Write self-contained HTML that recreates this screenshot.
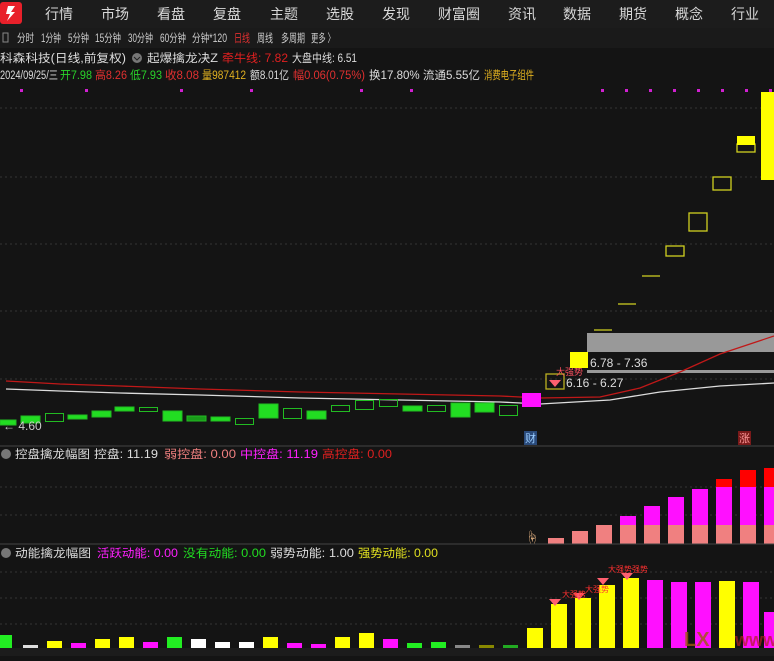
<!DOCTYPE html>
<html><head><meta charset="utf-8"><style>
body{margin:0;width:774px;height:656px;background:#141414;overflow:hidden;font-family:"Liberation Sans","Noto Sans CJK SC",sans-serif;}
svg text{font-family:"Liberation Sans","Noto Sans CJK SC",sans-serif;}
</style></head><body>
<svg width="774" height="656" xmlns="http://www.w3.org/2000/svg">
<rect width="774" height="656" fill="#141414"/>
<rect width="774" height="28" fill="#1c1c1c"/>
<rect x="0" y="2" width="22" height="22" rx="3" fill="#e8202a"/>
<path d="M8 6 L15 6 L11 12 L15 12 L7 21 L10 14 L6 14 Z" fill="#fff"/>
<g fill="#d8d8d8" font-size="14">
<text x="45" y="19">行情</text><text x="101" y="19">市场</text><text x="157" y="19">看盘</text><text x="213" y="19">复盘</text><text x="270" y="19">主题</text><text x="326" y="19">选股</text><text x="382" y="19">发现</text><text x="438" y="19">财富圈</text><text x="508" y="19">资讯</text><text x="563" y="19">数据</text><text x="619" y="19">期货</text><text x="675" y="19">概念</text><text x="731" y="19">行业</text>
</g>
<rect x="0" y="28" width="774" height="20" fill="#1a1a1a"/>
<rect x="3" y="33" width="5" height="9" fill="none" stroke="#888" stroke-width="1"/>
<g font-size="11.5" fill="#ccc" lengthAdjust="spacingAndGlyphs">
<text x="17" y="42" textLength="17" lengthAdjust="spacingAndGlyphs">分时</text>
<text x="41" y="42" textLength="20" lengthAdjust="spacingAndGlyphs">1分钟</text>
<text x="68" y="42" textLength="21" lengthAdjust="spacingAndGlyphs">5分钟</text>
<text x="95" y="42" textLength="26" lengthAdjust="spacingAndGlyphs">15分钟</text>
<text x="128" y="42" textLength="25" lengthAdjust="spacingAndGlyphs">30分钟</text>
<text x="160" y="42" textLength="26" lengthAdjust="spacingAndGlyphs">60分钟</text>
<text x="192" y="42" textLength="35" lengthAdjust="spacingAndGlyphs">分钟*120</text>
<text x="234" y="42" fill="#e03030" textLength="16" lengthAdjust="spacingAndGlyphs">日线</text>
<text x="257" y="42" textLength="16" lengthAdjust="spacingAndGlyphs">周线</text>
<text x="281" y="42" textLength="24" lengthAdjust="spacingAndGlyphs">多周期</text>
<text x="311" y="42" textLength="24" lengthAdjust="spacingAndGlyphs">更多 〉</text>
</g>
<g font-size="11.5">
<text x="0" y="62" fill="#ddd" textLength="126" lengthAdjust="spacingAndGlyphs">科森科技(日线,前复权)</text>
<circle cx="137" cy="58" r="5" fill="#777"/><path d="M134 57 L137 60 L140 57" stroke="#222" fill="none"/>
<text x="147" y="62" fill="#ddd" textLength="71" lengthAdjust="spacingAndGlyphs">起爆擒龙决Z</text>
<text x="222" y="62" fill="#e02020" textLength="66" lengthAdjust="spacingAndGlyphs">牵牛线: 7.82</text>
<text x="292" y="62" fill="#ddd" textLength="65" lengthAdjust="spacingAndGlyphs">大盘中线: 6.51</text>
<text x="0" y="79" fill="#ddd" textLength="58" lengthAdjust="spacingAndGlyphs">2024/09/25/三</text>
<text x="60" y="79" fill="#2ad12a" textLength="32" lengthAdjust="spacingAndGlyphs">开7.98</text>
<text x="95" y="79" fill="#e03030" textLength="32" lengthAdjust="spacingAndGlyphs">高8.26</text>
<text x="130" y="79" fill="#2ad12a" textLength="32" lengthAdjust="spacingAndGlyphs">低7.93</text>
<text x="165" y="79" fill="#e03030" textLength="34" lengthAdjust="spacingAndGlyphs">收8.08</text>
<text x="202" y="79" fill="#e0b020" textLength="44" lengthAdjust="spacingAndGlyphs">量987412</text>
<text x="250" y="79" fill="#ddd" textLength="39" lengthAdjust="spacingAndGlyphs">额8.01亿</text>
<text x="293" y="79" fill="#e03030" textLength="72" lengthAdjust="spacingAndGlyphs">幅0.06(0.75%)</text>
<text x="369" y="79" fill="#ddd" textLength="111" lengthAdjust="spacingAndGlyphs">换17.80% 流通5.55亿</text>
<text x="484" y="79" fill="#e0b020" textLength="50" lengthAdjust="spacingAndGlyphs">消费电子组件</text>
</g>
<g fill="#d020d0">
<rect x="20" y="89" width="3" height="3"/><rect x="85" y="89" width="3" height="3"/><rect x="180" y="89" width="3" height="3"/><rect x="250" y="89" width="3" height="3"/><rect x="360" y="89" width="3" height="3"/><rect x="410" y="89" width="3" height="3"/>
<rect x="601" y="89" width="3" height="3"/><rect x="625" y="89" width="3" height="3"/><rect x="649" y="89" width="3" height="3"/><rect x="673" y="89" width="3" height="3"/><rect x="697" y="89" width="3" height="3"/><rect x="721" y="89" width="3" height="3"/><rect x="745" y="89" width="3" height="3"/><rect x="769" y="89" width="3" height="3"/>
</g>
<g stroke="#333" stroke-dasharray="2 3">
<line x1="0" y1="108" x2="774" y2="108"/><line x1="0" y1="177" x2="774" y2="177"/><line x1="0" y1="244" x2="774" y2="244"/><line x1="0" y1="311" x2="774" y2="311"/><line x1="0" y1="379" x2="774" y2="379"/>
<line x1="0" y1="487" x2="774" y2="487"/><line x1="0" y1="515" x2="774" y2="515"/>
<line x1="0" y1="572" x2="774" y2="572"/><line x1="0" y1="598" x2="774" y2="598"/><line x1="0" y1="624" x2="774" y2="624"/>
</g>
<rect x="587" y="333" width="187" height="19" fill="#999"/>
<rect x="587" y="370" width="187" height="3" fill="#999"/>
<text x="590" y="367" fill="#ddd" font-size="12">6.78 - 7.36</text>
<text x="566" y="387" fill="#ddd" font-size="12">6.16 - 6.27</text>
<polyline points="6,381 60,384 120,386 200,389 300,392 400,394 500,396 540,398 600,397 640,388 680,372 720,354 774,336" fill="none" stroke="#c01818" stroke-width="1.3"/>
<polyline points="6,389 60,391 120,393 200,395 300,398 400,400 500,402 540,404 610,400 660,392 720,386 774,383" fill="none" stroke="#ddd" stroke-width="1.3"/>
<g fill="#22dd22" stroke="#22bb22">
<rect x="0" y="420" width="16" height="5"/><rect x="21" y="416" width="19" height="7"/>
<rect x="45.5" y="413.5" width="18" height="8" fill="none"/><rect x="68" y="415" width="19" height="4"/><rect x="92" y="411" width="19" height="6"/><rect x="115" y="407" width="19" height="4"/><rect x="139.5" y="407.5" width="18" height="4" fill="none"/>
<rect x="163" y="411" width="19" height="10"/><rect x="187" y="416" width="19" height="5" fill="#1a9a1a"/><rect x="211" y="417" width="19" height="4"/><rect x="235.5" y="418.5" width="18" height="6" fill="none"/>
<rect x="259" y="404" width="19" height="14"/><rect x="283.5" y="408.5" width="18" height="10" fill="none"/><rect x="307" y="411" width="19" height="8"/><rect x="331.5" y="405.5" width="18" height="6" fill="none"/>
<rect x="355.5" y="400.5" width="18" height="9" fill="none"/><rect x="379.5" y="399.5" width="18" height="7" fill="none"/><rect x="403" y="406" width="19" height="5"/><rect x="427.5" y="405.5" width="18" height="6" fill="none"/>
<rect x="451" y="403" width="19" height="14"/><rect x="475" y="403" width="19" height="9"/><rect x="499.5" y="405.5" width="18" height="10" fill="none"/>
</g>
<rect x="522" y="393" width="19" height="14" fill="#ff10ff"/>
<rect x="546" y="374" width="18" height="15" fill="none" stroke="#bbb020" stroke-width="1.3"/>
<path d="M549 380 L561 380 L555 387 Z" fill="#ff6070"/>
<text x="556" y="375" fill="#ff5060" font-size="9">大强势</text>
<rect x="570" y="352" width="18" height="16" fill="#ffff00"/>
<g fill="none" stroke="#d0d020" stroke-width="1.3">
<line x1="594" y1="330" x2="612" y2="330"/><line x1="618" y1="304" x2="636" y2="304"/><line x1="642" y1="276" x2="660" y2="276"/>
<rect x="666" y="246" width="18" height="10"/><rect x="689" y="213" width="18" height="18"/><rect x="713" y="177" width="18" height="13"/><rect x="737" y="144" width="18" height="8"/>
</g>
<rect x="737" y="136" width="18" height="9" fill="#ffff00"/>
<rect x="761" y="92" width="13" height="88" fill="#ffff00"/>
<text x="3" y="430" fill="#ccc" font-size="12">← 4.60</text>
<rect x="524" y="431" width="13" height="14" fill="#2a4a7a"/><text x="525" y="442" fill="#9cf" font-size="11">财</text>
<rect x="738" y="431" width="13" height="14" fill="#7a1a1a"/><text x="739" y="442" fill="#f99" font-size="11">涨</text>
<line x1="0" y1="446" x2="774" y2="446" stroke="#444"/>
<circle cx="6" cy="454" r="5" fill="#777"/>
<g font-size="11.5">
<text x="15" y="458" fill="#ddd" textLength="75" lengthAdjust="spacingAndGlyphs">控盘擒龙幅图</text>
<text x="94" y="458" fill="#ddd" textLength="64" lengthAdjust="spacingAndGlyphs">控盘: 11.19</text>
<text x="164" y="458" fill="#f08080" textLength="72" lengthAdjust="spacingAndGlyphs">弱控盘: 0.00</text>
<text x="240" y="458" fill="#ff20ff" textLength="78" lengthAdjust="spacingAndGlyphs">中控盘: 11.19</text>
<text x="322" y="458" fill="#e02020" textLength="70" lengthAdjust="spacingAndGlyphs">高控盘: 0.00</text>
</g>
<g fill="#f08080">
<rect x="548" y="538" width="16" height="6"/><rect x="572" y="531" width="16" height="13"/><rect x="596" y="525" width="16" height="19"/><rect x="620" y="525" width="16" height="19"/><rect x="644" y="525" width="16" height="19"/><rect x="668" y="525" width="16" height="19"/><rect x="692" y="525" width="16" height="19"/><rect x="716" y="525" width="16" height="19"/><rect x="740" y="525" width="16" height="19"/><rect x="764" y="525" width="10" height="19"/>
</g>
<g fill="#ff10ff">
<rect x="620" y="516" width="16" height="9"/><rect x="644" y="506" width="16" height="19"/><rect x="668" y="497" width="16" height="28"/><rect x="692" y="489" width="16" height="36"/><rect x="716" y="487" width="16" height="38"/><rect x="740" y="487" width="16" height="38"/><rect x="764" y="487" width="10" height="38"/>
</g>
<g fill="#ff0000"><rect x="716" y="479" width="16" height="8"/><rect x="740" y="470" width="16" height="17"/><rect x="764" y="468" width="10" height="19"/></g>
<text x="525" y="543" font-size="14" fill="#e0b080">☝</text>
<line x1="0" y1="544" x2="774" y2="544" stroke="#444"/>
<circle cx="6" cy="553" r="5" fill="#777"/>
<g font-size="11.5">
<text x="15" y="557" fill="#ddd" textLength="76" lengthAdjust="spacingAndGlyphs">动能擒龙幅图</text>
<text x="97" y="557" fill="#ff20ff" textLength="81" lengthAdjust="spacingAndGlyphs">活跃动能: 0.00</text>
<text x="183" y="557" fill="#22dd22" textLength="83" lengthAdjust="spacingAndGlyphs">没有动能: 0.00</text>
<text x="270" y="557" fill="#ddd" textLength="84" lengthAdjust="spacingAndGlyphs">弱势动能: 1.00</text>
<text x="358" y="557" fill="#e0e020" textLength="80" lengthAdjust="spacingAndGlyphs">强势动能: 0.00</text>
</g>
<g>
<rect x="0" y="635" width="12" height="13" fill="#22ee22"/><rect x="23" y="645" width="15" height="3" fill="#ddd"/><rect x="47" y="641" width="15" height="7" fill="#ffff00"/><rect x="71" y="643" width="15" height="5" fill="#ff10ff"/><rect x="95" y="639" width="15" height="9" fill="#ffff00"/><rect x="119" y="637" width="15" height="11" fill="#ffff00"/><rect x="143" y="642" width="15" height="6" fill="#ff10ff"/><rect x="167" y="637" width="15" height="11" fill="#22ee22"/><rect x="191" y="639" width="15" height="9" fill="#fff"/><rect x="215" y="642" width="15" height="6" fill="#fff"/><rect x="239" y="642" width="15" height="6" fill="#fff"/><rect x="263" y="637" width="15" height="11" fill="#ffff00"/><rect x="287" y="643" width="15" height="5" fill="#ff10ff"/><rect x="311" y="644" width="15" height="4" fill="#ff10ff"/><rect x="335" y="637" width="15" height="11" fill="#ffff00"/><rect x="359" y="633" width="15" height="15" fill="#ffff00"/><rect x="383" y="639" width="15" height="9" fill="#ff10ff"/><rect x="407" y="643" width="15" height="5" fill="#22ee22"/><rect x="431" y="642" width="15" height="6" fill="#22ee22"/><rect x="455" y="645" width="15" height="3" fill="#888"/><rect x="479" y="645" width="15" height="3" fill="#888800"/><rect x="503" y="645" width="15" height="3" fill="#22aa22"/>
<rect x="527" y="628" width="16" height="20" fill="#ffff00"/><rect x="551" y="604" width="16" height="44" fill="#ffff00"/><rect x="575" y="598" width="16" height="50" fill="#ffff00"/><rect x="599" y="585" width="16" height="63" fill="#ffff00"/><rect x="623" y="578" width="16" height="70" fill="#ffff00"/><rect x="647" y="580" width="16" height="68" fill="#ff10ff"/><rect x="671" y="582" width="16" height="66" fill="#ff10ff"/><rect x="695" y="582" width="16" height="66" fill="#ff10ff"/><rect x="719" y="581" width="16" height="67" fill="#ffff00"/><rect x="743" y="582" width="16" height="66" fill="#ff10ff"/><rect x="764" y="612" width="10" height="36" fill="#ff10ff"/>
</g>
<g fill="#ff6070"><path d="M549 599 L561 599 L555 606 Z"/><path d="M573 593 L585 593 L579 600 Z"/><path d="M597 578 L609 578 L603 585 Z"/><path d="M621 573 L633 573 L627 580 Z"/></g>
<g fill="#ff3030" font-size="8"><text x="562" y="597">大强势</text><text x="585" y="592">大强势</text><text x="608" y="572">大强势强势</text></g>
<text x="684" y="646" fill="#a05a10" font-size="20" font-weight="bold" opacity="0.8">LX</text>
<text x="735" y="646" fill="#b02020" font-size="18" font-weight="bold" opacity="0.7">www</text>
<rect x="0" y="648" width="774" height="8" fill="#1c1c1c"/>
</svg>
</body></html>
